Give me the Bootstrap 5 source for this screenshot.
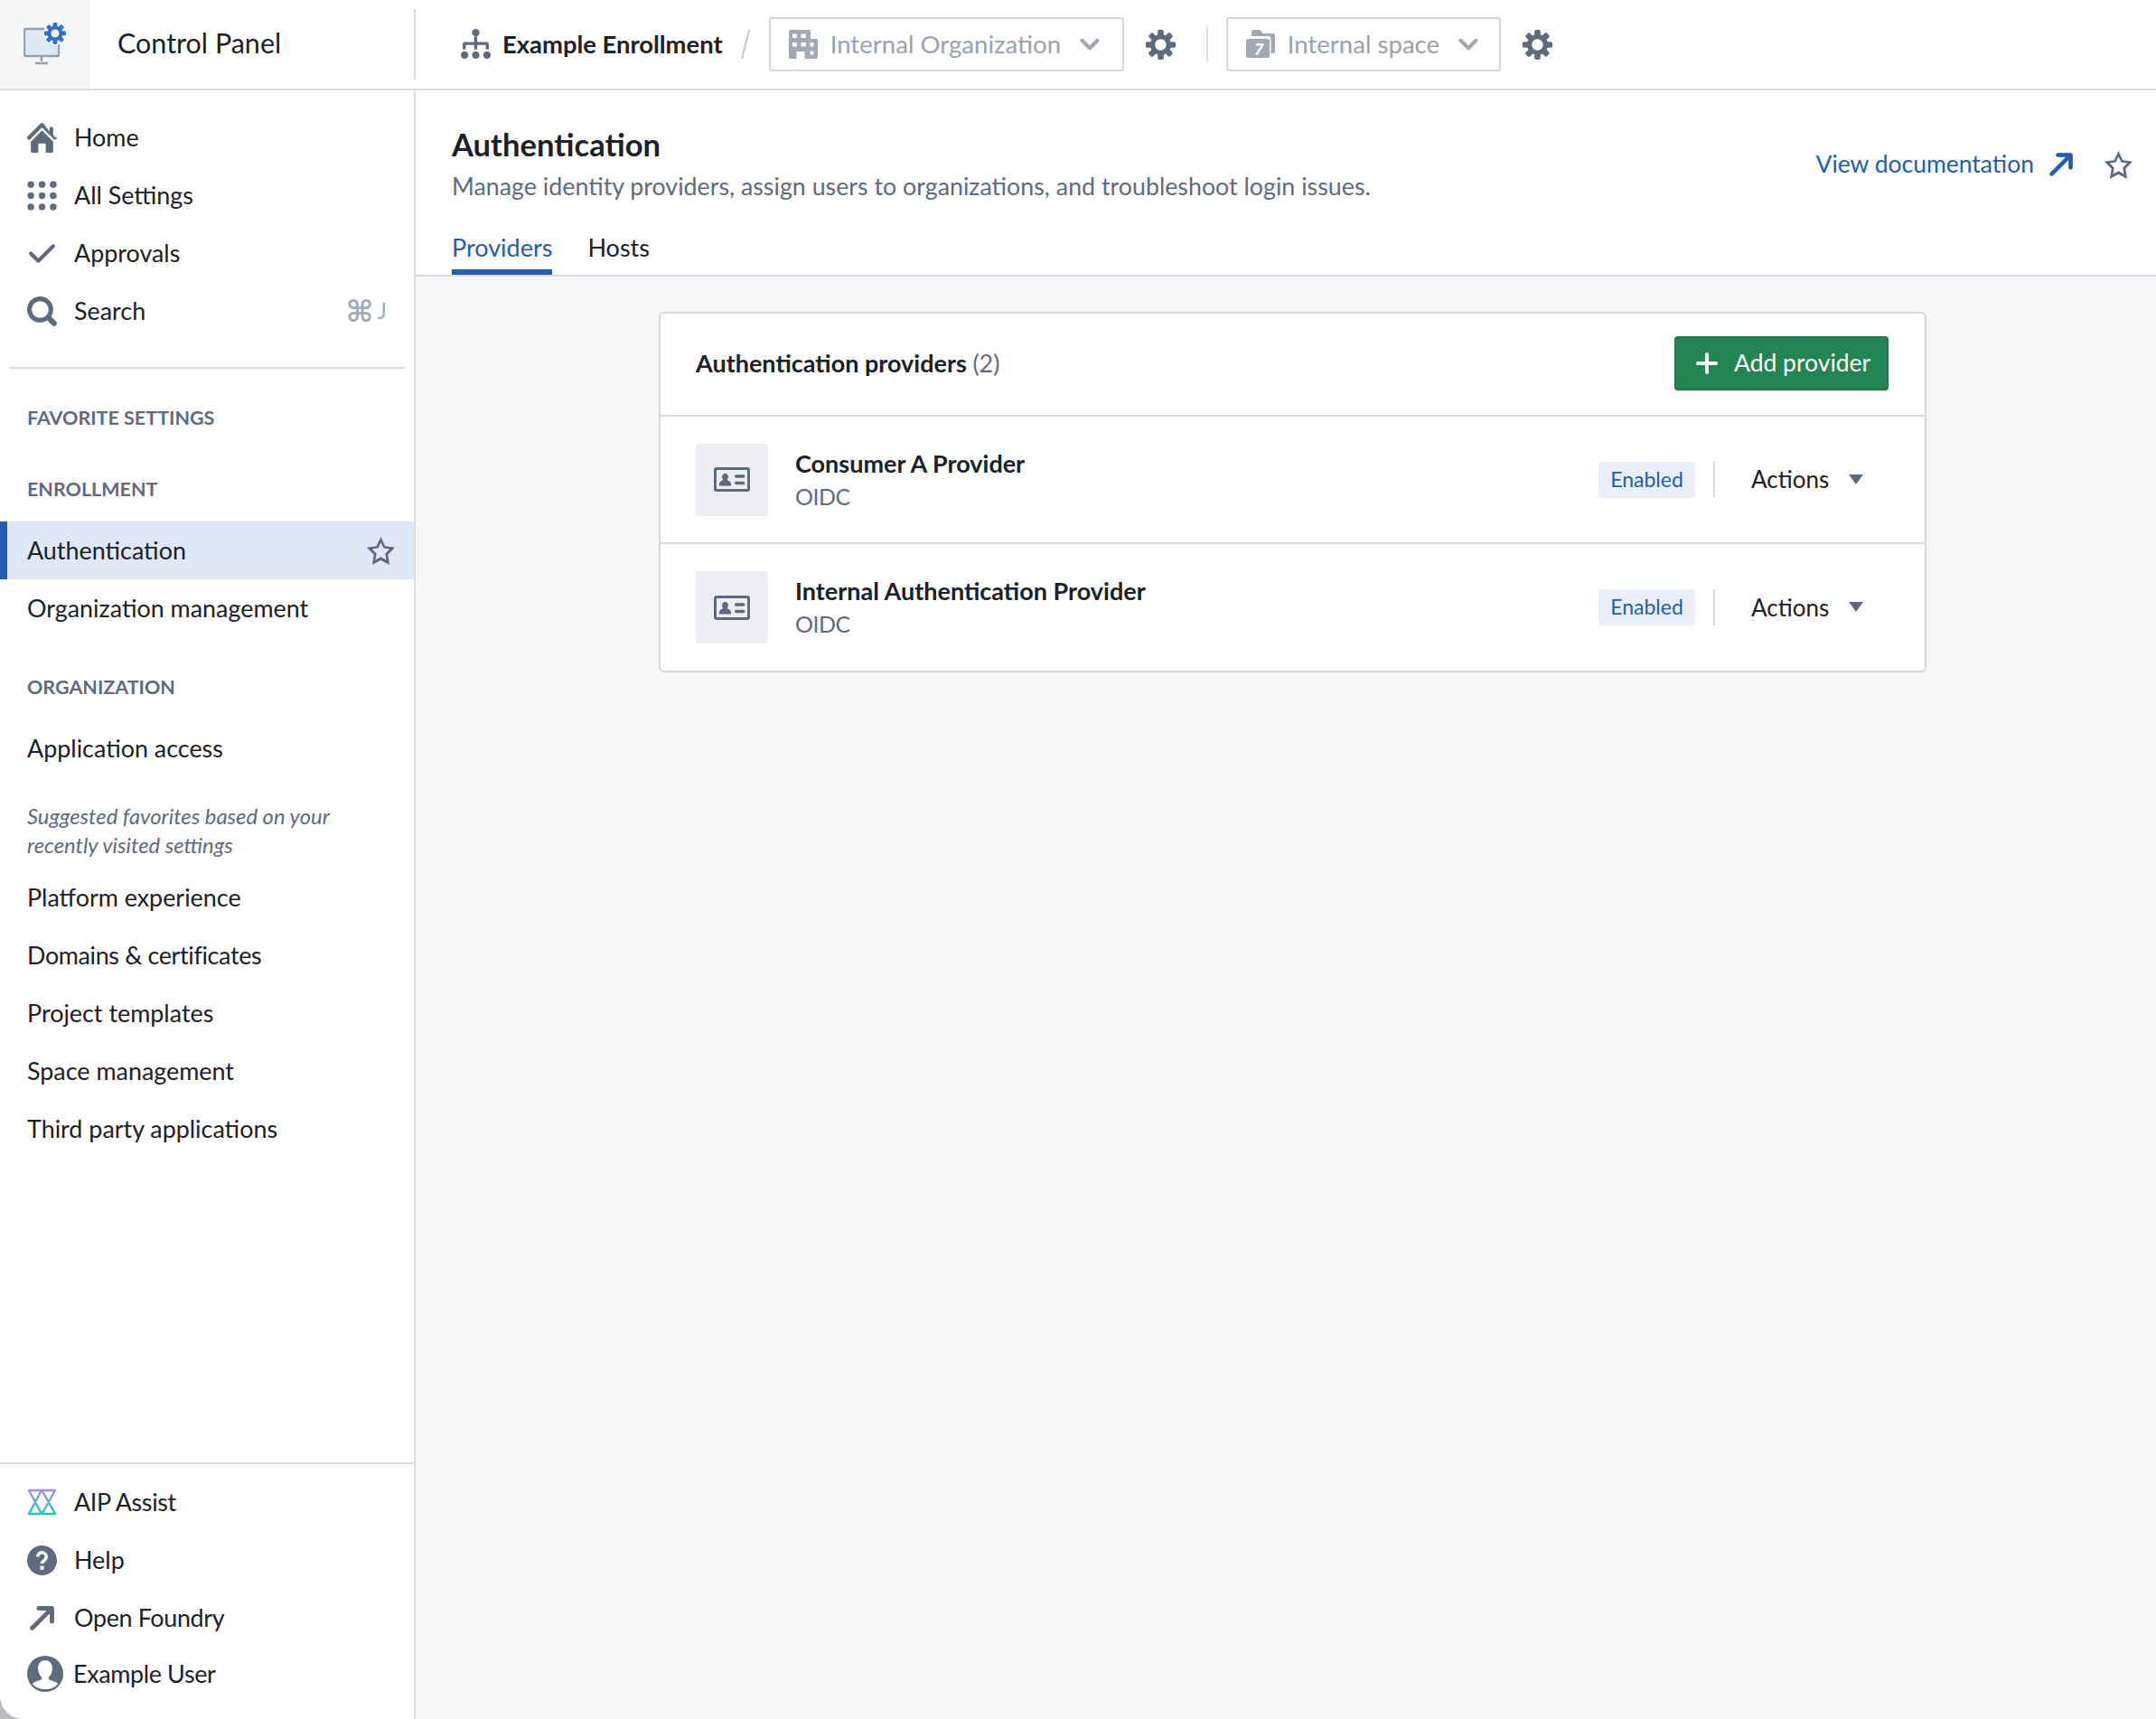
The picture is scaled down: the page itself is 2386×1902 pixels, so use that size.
<!DOCTYPE html>
<html lang="en">
<head>
  <meta charset="UTF-8">
  <title>Control Panel - Authentication</title>
  <link href="https://cdn.jsdelivr.net/npm/bootstrap@5.3.0/dist/css/bootstrap.min.css" rel="stylesheet">
  <style>
    html, body {
      height: 1902px;
      overflow: hidden;
    }

    body {
      font-family: "Lato", "Liberation Sans", sans-serif;
      font-size: 27px;
      color: #1c2127;
      background-color: #b9bbbe;
    }

    svg {
      display: block;
      flex: none;
      fill: #5f6b7c;
    }

    .app-frame {
      height: 1902px;
      background-color: #f6f7f9;
      border-bottom-left-radius: 26px;
      overflow: hidden;
    }

    /* top bar */
    .top-bar {
      height: 100px;
      background-color: #fff;
      border-bottom: 2px solid #dcdddf;
    }

    .logo-box {
      width: 100px;
      height: 98px;
      background-color: #f5f6f8;
    }

    .app-title {
      width: 358px;
      padding-left: 30px;
      padding-bottom: 2px;
      font-size: 30.5px;
    }

    .v-rule {
      width: 2px;
      background-color: #dcdddf;
    }

    .v-rule-tall {
      height: 78px;
    }

    .v-rule-short {
      height: 40px;
      margin-left: 34px;
      margin-right: 20px;
    }

    .enroll-name {
      margin-left: 50px;
      gap: 13px;
      font-weight: 700;
      font-size: 27.4px;
    }

    .crumb-slash {
      margin-left: 20px;
      margin-right: 21px;
    }

    .scope-btn {
      height: 60px;
      padding: 0 19px 0 20px;
      border: 2px solid #d5d8dc;
      border-radius: 4px;
      gap: 14px;
      color: #9aa2ad;
      font-size: 27.6px;
      white-space: nowrap;
      background-color: #fff;
    }

    .scope-btn svg {
      fill: #a3a9b3;
    }

    .scope-org {
      width: 393px;
    }

    .scope-space {
      width: 304px;
      padding-right: 17px;
    }

    .scope-btn .scope-chev {
      margin-left: auto;
    }

    .gear-gap {
      margin-left: 24px;
    }

    .thick-arrow path {
      stroke: #5f6b7c;
      stroke-width: .6;
    }

    /* sidebar */
    .side-col {
      width: 460px;
      background-color: #fff;
      border-right: 2px solid #dcdddf;
    }

    .side-link {
      height: 64px;
      padding: 0 0 0 30px;
      gap: 19px;
      color: #1c2127;
      font-size: 26.9px;
    }

    .side-link:hover {
      color: #1c2127;
    }

    .side-tight {
      letter-spacing: -.35px;
    }

    .side-top {
      padding-top: 20px;
    }

    .side-rule {
      height: 2px;
      margin: 30px 10px 0 10px;
      background-color: #dcdddf;
    }

    .side-label {
      height: 40px;
      padding-left: 30px;
      line-height: 40px;
      font-size: 21.5px;
      font-weight: 700;
      color: #5f6b7c;
      text-transform: uppercase;
    }

    .label-fav {
      margin-top: 34px;
    }

    .label-enroll {
      margin-top: 39px;
    }

    .label-org {
      margin-top: 35px;
    }

    .nav-after-label {
      margin-top: 16px;
    }

    .side-active {
      background-color: #dfe8f7;
      border-left: 8px solid #215db0;
      padding-left: 22px;
    }

    .side-active svg {
      margin-right: 21px;
    }

    .side-hint {
      margin-top: 28px;
      margin-bottom: 10px;
      padding-left: 30px;
      font-size: 23.8px;
      line-height: 31.5px;
      font-style: italic;
      color: #5f6b7c;
    }

    .kbd-hint {
      margin-left: auto;
      margin-right: 30px;
      gap: 4px;
      color: #a5abb5;
    }

    .kbd-cmd {
      font-family: "DejaVu Sans", sans-serif;
      font-size: 33px;
      line-height: 1;
      font-weight: 700;
    }

    .kbd-key {
      font-size: 25px;
    }

    .side-bottom {
      border-top: 2px solid #dcdddf;
      padding-top: 10px;
      padding-bottom: 20px;
    }

    .side-user {
      gap: 11px;
      height: 60px;
    }

    /* page header */
    .page-head {
      height: 206px;
      padding: 40px 26px 0 40px;
      background-color: #fff;
      border-bottom: 2px solid #d5d8dc;
    }

    .page-name {
      margin: 0 0 8px;
      font-size: 34.6px;
      line-height: 40px;
      font-weight: 700;
    }

    .page-sub {
      font-size: 26.8px;
      line-height: 36px;
      color: #5f6b7c;
    }

    .doc-link {
      gap: 16px;
      color: #215db0;
      text-decoration: none;
      font-size: 26.5px;
    }

    .doc-link svg {
      fill: #215db0;
    }

    .doc-link .thick-arrow path {
      stroke: #215db0;
    }

    .head-star {
      margin-left: 34px;
    }

    .head-tabs {
      margin-top: 22px;
      gap: 39px;
      border: 0;
    }

    .head-tab {
      height: 58px;
      padding: 0;
      line-height: 56px;
      color: #1c2127;
      font-size: 27px;
      border-bottom: 6px solid transparent;
    }

    .head-tab.active {
      color: #215db0;
      border-bottom-color: #215db0;
    }

    /* providers card */
    .prov-card {
      width: 1403px;
      margin: 39px 0 0 269px;
      border: 2px solid #d5d8dc;
      border-radius: 6px;
      background-color: #fff;
      overflow: hidden;
    }

    .prov-head {
      height: 114px;
      padding: 0 40px 3px 39px;
      border-bottom: 2px solid #dcdddf;
      font-weight: 700;
      font-size: 27px;
    }

    .prov-head-text {
      padding-top: 2px;
    }

    .prov-count {
      color: #5f6b7c;
      font-weight: 400;
    }

    .add-btn {
      width: 237px;
      height: 60px;
      padding: 1px 0 0 18px;
      gap: 14px;
      font-size: 26.5px;
      color: #fff;
      background-color: #238551;
      border: 2px solid #1f7a4a;
      border-radius: 4px;
      box-shadow: 0 1px 2px rgba(17, 20, 24, .2);
    }

    .add-btn svg {
      fill: #fff;
    }

    .prov-row {
      height: 141px;
      padding: 0 40px 0 39px;
      border-bottom: 2px solid #dcdddf;
    }

    .prov-row:last-child {
      border-bottom: 0;
      height: 140px;
    }

    .prov-thumb {
      width: 80px;
      height: 80px;
      margin-right: 30px;
      background-color: #edeff2;
      border-radius: 4px;
    }

    .prov-name {
      font-weight: 700;
      font-size: 27px;
      line-height: 36px;
    }

    .prov-type {
      color: #5f6b7c;
      font-size: 25px;
      letter-spacing: -.5px;
      line-height: 36px;
    }

    .state-tag {
      width: 107px;
      height: 40px;
      padding: 0;
      line-height: 38px;
      font-size: 23px;
      font-weight: 400;
      color: #215db0;
      background-color: #e9f0fb;
      border-radius: 4px;
    }

    .tag-rule {
      height: 40px;
      margin: 0 40px 0 20px;
    }

    .act-btn {
      width: 152px;
      padding: 0;
      gap: 22px;
      border: 0;
      font-size: 26px;
      color: #1c2127;
    }
  </style>
</head>
<body>
  <div class="app-frame d-flex flex-column">

    <!-- Top bar -->
    <div class="top-bar d-flex align-items-center flex-shrink-0">
      <div class="logo-box d-flex align-items-center justify-content-center">
        <svg width="48" height="48" viewBox="0 0 48 48">
          <rect x="1" y="7" width="38" height="30" rx="1.5" fill="#dfe8f7" stroke="#98a1ad" stroke-width="2.4"/>
          <path d="M20 37v6M13 45h14" fill="none" stroke="#98a1ad" stroke-width="2.4"/>
          <circle cx="35" cy="12" r="13" fill="#f5f6f8"/>
          <path transform="translate(23 0) scale(1.5)" fill="#2d72d2" d="M15.19 6.39h-1.85c-.11-.37-.27-.71-.45-1.04l1.36-1.36c.31-.31.31-.82 0-1.13l-1.13-1.13a.803.803 0 00-1.13 0l-1.36 1.36c-.33-.17-.67-.33-1.04-.44V.79c0-.44-.36-.8-.8-.8h-1.6c-.44 0-.8.36-.8.8v1.86c-.39.12-.75.28-1.1.47l-1.3-1.3c-.3-.3-.79-.3-1.09 0L1.82 2.91c-.3.3-.3.79 0 1.09l1.3 1.3c-.2.34-.36.7-.48 1.09H.79c-.44 0-.8.36-.8.8v1.6c0 .44.36.8.8.8h1.85c.11.37.27.71.45 1.04l-1.36 1.36c-.31.31-.31.82 0 1.13l1.13 1.13c.31.31.82.31 1.13 0l1.36-1.36c.33.18.67.33 1.04.44v1.86c0 .44.36.8.8.8h1.6c.44 0 .8-.36.8-.8v-1.86c.39-.12.75-.28 1.1-.47l1.3 1.3c.3.3.79.3 1.09 0l1.09-1.09c.3-.3.3-.79 0-1.09l-1.3-1.3c.19-.35.36-.71.48-1.1h1.85c.44 0 .8-.36.8-.8v-1.6a.816.816 0 00-.81-.79zm-7.2 4.6c-1.66 0-3-1.34-3-3s1.34-3 3-3 3 1.34 3 3-1.34 3-3 3z"/>
        </svg>
      </div>
      <div class="app-title">Control Panel</div>
      <div class="v-rule v-rule-tall"></div>

      <div class="enroll-name d-flex align-items-center">
        <svg width="33" height="33" viewBox="0 0 16 16">
          <circle cx="8" cy="2" r="2"/><circle cx="2" cy="14" r="2"/><circle cx="8" cy="14" r="2"/><circle cx="14" cy="14" r="2"/>
          <path d="M7.2 4h1.6v3H14a1 1 0 011 1v3h-1.600V8.600H8.800V11H7.200V8.600H2.600V11H1V8a1 1 0 011-1h5.200z"/>
        </svg>
        <span>Example Enrollment</span>
      </div>
      <svg class="crumb-slash" width="10" height="34" viewBox="0 0 10 34"><path d="M9 1L1 33" fill="none" stroke="#c5c8cd" stroke-width="2"/></svg>

      <button class="scope-btn scope-org btn d-flex align-items-center">
        <svg width="32" height="32" viewBox="0 0 32 32"><path fill-rule="evenodd" d="M2 0h20a2 2 0 012 2v8h6a2 2 0 012 2v18a2 2 0 01-2 2H17.500v-8h-9v8H2a2 2 0 01-2-2V2a2 2 0 012-2zm2 4.500V9h5V4.500zm9.500 0V9H19V4.500zM4 14v4.500h5V14zm9.500 0v4.500H19V14zm10 0v4.500h4V14zm0 9.500v4h4v-4z"/></svg>
        <span>Internal Organization</span>
        <svg class="scope-chev" width="34" height="34" viewBox="0 0 16 16"><path d="M12 5c-.28 0-.53.11-.71.29L8 8.59l-3.29-3.3a1.003 1.003 0 00-1.42 1.42l4 4c.18.18.43.29.71.29s.53-.11.71-.29l4-4A1.003 1.003 0 0012 5z"/></svg>
      </button>
      <svg class="gear-gap" width="33" height="33" viewBox="0 0 16 16"><path d="M15.19 6.39h-1.85c-.11-.37-.27-.71-.45-1.04l1.36-1.36c.31-.31.31-.82 0-1.13l-1.13-1.13a.803.803 0 00-1.13 0l-1.36 1.36c-.33-.17-.67-.33-1.04-.44V.79c0-.44-.36-.8-.8-.8h-1.6c-.44 0-.8.36-.8.8v1.86c-.39.12-.75.28-1.1.47l-1.3-1.3c-.3-.3-.79-.3-1.09 0L1.82 2.91c-.3.3-.3.79 0 1.09l1.3 1.3c-.2.34-.36.7-.48 1.09H.79c-.44 0-.8.36-.8.8v1.6c0 .44.36.8.8.8h1.85c.11.37.27.71.45 1.04l-1.36 1.36c-.31.31-.31.82 0 1.13l1.13 1.13c.31.31.82.31 1.13 0l1.36-1.36c.33.18.67.33 1.04.44v1.86c0 .44.36.8.8.8h1.6c.44 0 .8-.36.8-.8v-1.86c.39-.12.75-.28 1.1-.47l1.3 1.3c.3.3.79.3 1.09 0l1.09-1.09c.3-.3.3-.79 0-1.09l-1.3-1.3c.19-.35.36-.71.48-1.1h1.85c.44 0 .8-.36.8-.8v-1.6a.816.816 0 00-.81-.79zm-7.2 4.6c-1.66 0-3-1.34-3-3s1.34-3 3-3 3 1.34 3 3-1.34 3-3 3z"/></svg>
      <div class="v-rule v-rule-short"></div>
      <button class="scope-btn scope-space btn d-flex align-items-center">
        <svg width="32" height="32" viewBox="0 0 32 32">
          <path d="M6 7V2a2 2 0 012-2h7l4 4h11a2 2 0 012 2v18a2 2 0 01-2 2h-2.500V10a3 3 0 00-3-3z"/>
          <path fill-rule="evenodd" d="M2 10h22a2 2 0 012 2v17a2 2 0 01-2 2H2a2 2 0 01-2-2V12a2 2 0 012-2zm9 5v2.500h5.500L10 27.500h3L19.500 17v-2z"/>
        </svg>
        <span>Internal space</span>
        <svg class="scope-chev" width="34" height="34" viewBox="0 0 16 16"><path d="M12 5c-.28 0-.53.11-.71.29L8 8.59l-3.29-3.3a1.003 1.003 0 00-1.42 1.42l4 4c.18.18.43.29.71.29s.53-.11.71-.29l4-4A1.003 1.003 0 0012 5z"/></svg>
      </button>
      <svg class="gear-gap" width="33" height="33" viewBox="0 0 16 16"><path d="M15.19 6.39h-1.85c-.11-.37-.27-.71-.45-1.04l1.36-1.36c.31-.31.31-.82 0-1.13l-1.13-1.13a.803.803 0 00-1.13 0l-1.36 1.36c-.33-.17-.67-.33-1.04-.44V.79c0-.44-.36-.8-.8-.8h-1.6c-.44 0-.8.36-.8.8v1.86c-.39.12-.75.28-1.1.47l-1.3-1.3c-.3-.3-.79-.3-1.09 0L1.82 2.91c-.3.3-.3.79 0 1.09l1.3 1.3c-.2.34-.36.7-.48 1.09H.79c-.44 0-.8.36-.8.8v1.6c0 .44.36.8.8.8h1.85c.11.37.27.71.45 1.04l-1.36 1.36c-.31.31-.31.82 0 1.13l1.13 1.13c.31.31.82.31 1.13 0l1.36-1.36c.33.18.67.33 1.04.44v1.86c0 .44.36.8.8.8h1.6c.44 0 .8-.36.8-.8v-1.86c.39-.12.75-.28 1.1-.47l1.3 1.3c.3.3.79.3 1.09 0l1.09-1.09c.3-.3.3-.79 0-1.09l-1.3-1.3c.19-.35.36-.71.48-1.1h1.85c.44 0 .8-.36.8-.8v-1.6a.816.816 0 00-.81-.79zm-7.2 4.6c-1.66 0-3-1.34-3-3s1.34-3 3-3 3 1.34 3 3-1.34 3-3 3z"/></svg>
    </div>

    <div class="d-flex flex-grow-1">
      <!-- Sidebar -->
      <div class="side-col d-flex flex-column flex-shrink-0">
        <nav class="nav flex-column side-top">
          <a class="nav-link side-link d-flex align-items-center" href="#">
            <svg width="33" height="33" viewBox="0 0 16 16"><path d="M2 10v5c0 .55.45 1 1 1h3v-5h4v5h3c.55 0 1-.45 1-1v-5L8 4l-6 6zm13.71-1.71L14 6.59V3c0-.55-.45-1-1-1s-1 .45-1 1v1.59L8.71.29C8.53.11 8.28 0 8 0s-.53.11-.71.29l-7 7a1.003 1.003 0 001.42 1.42L8 2.41l6.29 6.29c.18.19.43.3.71.3a1.003 1.003 0 00.71-1.71z"/></svg>
            Home
          </a>
          <a class="nav-link side-link d-flex align-items-center" href="#">
            <svg width="33" height="33" viewBox="0 0 16 16"><circle cx="2" cy="2" r="1.8"/><circle cx="8" cy="2" r="1.8"/><circle cx="14" cy="2" r="1.8"/><circle cx="2" cy="8" r="1.8"/><circle cx="8" cy="8" r="1.8"/><circle cx="14" cy="8" r="1.8"/><circle cx="2" cy="14" r="1.8"/><circle cx="8" cy="14" r="1.8"/><circle cx="14" cy="14" r="1.8"/></svg>
            All Settings
          </a>
          <a class="nav-link side-link d-flex align-items-center" href="#">
            <svg width="33" height="33" viewBox="0 0 16 16"><path d="M14 3c-.28 0-.53.11-.71.29L6 10.59l-3.29-3.3a1.003 1.003 0 00-1.42 1.42l4 4c.18.18.43.29.71.29s.53-.11.71-.29l8-8A1.003 1.003 0 0014 3z"/></svg>
            Approvals
          </a>
          <a class="nav-link side-link d-flex align-items-center" href="#">
            <svg width="33" height="33" viewBox="0 0 16 16"><path d="M15.55 13.43l-2.67-2.68a6.94 6.94 0 001.13-3.76c0-3.87-3.14-7-7.01-7S0 3.12 0 6.99s3.14 7 7.01 7c1.39 0 2.68-.41 3.77-1.12l2.67 2.67a1.498 1.498 0 002.12-2.11zM7.01 11.5c-2.49 0-4.51-2.02-4.51-4.5s2.02-4.5 4.51-4.5 4.51 2.02 4.51 4.5-2.02 4.5-4.51 4.5z"/></svg>
            Search
            <span class="kbd-hint d-flex align-items-center"><span class="kbd-cmd">⌘</span><span class="kbd-key">J</span></span>
          </a>
        </nav>
        <div class="side-rule"></div>

        <div class="side-label label-fav">Favorite settings</div>
        <div class="side-label label-enroll">Enrollment</div>
        <nav class="nav flex-column nav-after-label">
          <a class="nav-link side-link side-active d-flex align-items-center justify-content-between" href="#">
            Authentication
            <svg width="31" height="31" viewBox="0 0 16 16"><path d="M16 6.11l-5.53-.84L8 0 5.53 5.27 0 6.11l4 4.1L3.06 16 8 13.27 12.94 16 12 10.21l4-4.1zM4.91 13.2l.59-3.62L3 7.02l3.45-.53L8 3.2l1.55 3.29 3.45.53-2.5 2.56.59 3.62L8 11.49 4.91 13.2z"/></svg>
          </a>
          <a class="nav-link side-link d-flex align-items-center" href="#">Organization management</a>
        </nav>
        <div class="side-label label-org">Organization</div>
        <nav class="nav flex-column nav-after-label">
          <a class="nav-link side-link d-flex align-items-center" href="#">Application access</a>
        </nav>
        <div class="side-hint">Suggested favorites based on your<br>recently visited settings</div>
        <nav class="nav flex-column">
          <a class="nav-link side-link d-flex align-items-center" href="#">Platform experience</a>
          <a class="nav-link side-link side-tight d-flex align-items-center" href="#">Domains &amp; certificates</a>
          <a class="nav-link side-link d-flex align-items-center" href="#">Project templates</a>
          <a class="nav-link side-link d-flex align-items-center" href="#">Space management</a>
          <a class="nav-link side-link d-flex align-items-center" href="#">Third party applications</a>
        </nav>

        <nav class="nav flex-column side-bottom mt-auto">
          <a class="nav-link side-link side-tight d-flex align-items-center" href="#">
            <svg width="33" height="30" viewBox="0 0 33 30">
              <defs><linearGradient id="aipGrad" x1="0" y1="0" x2="0" y2="1"><stop offset="0" stop-color="#a48cf6"/><stop offset="1" stop-color="#1cc5bf"/></linearGradient></defs>
              <path d="M2 2h14L2 28h14zM16.500 2h14.500L16.500 28h14.500z" fill="none" stroke="url(#aipGrad)" stroke-width="2.4" stroke-linejoin="round"/>
            </svg>
            AIP Assist
          </a>
          <a class="nav-link side-link d-flex align-items-center" href="#">
            <svg width="33" height="33" viewBox="0 0 16 16"><circle cx="8" cy="8" r="8"/><path d="M5.700 6.100a2.300 2.300 0 114 1.500c-.8.7-1.700 1.100-1.700 2.100" fill="none" stroke="#fff" stroke-width="1.700"/><rect x="7" y="11" width="2" height="2" fill="#fff"/></svg>
            Help
          </a>
          <a class="nav-link side-link side-tight d-flex align-items-center" href="#">
            <svg class="thick-arrow" width="33" height="33" viewBox="-1 -1 18 18"><path d="M14 1H6c-.55 0-1 .45-1 1s.45 1 1 1h5.590L1.290 13.290a1.003 1.003 0 001.420 1.420L13 4.410V10c0 .55.45 1 1 1s1-.45 1-1V2c0-.55-.45-1-1-1z"/></svg>
            Open Foundry
          </a>
          <a class="nav-link side-link side-user side-tight d-flex align-items-center" href="#">
            <svg width="40" height="40" viewBox="0 0 40 40">
              <circle cx="20" cy="20" r="20"/>
              <path d="M20 5c-5 0-8 4-8 9 0 4 2 8 4 9.500v2.500c-3 2-8 2-10 5 3 4 8 6 14 6s11-2 14-6c-2-3-7-3-10-5v-2.500c2-1.500 4-5.500 4-9.500 0-5-3-9-8-9z" fill="#fff"/>
            </svg>
            Example User
          </a>
        </nav>
      </div>

      <!-- Main -->
      <main class="flex-grow-1">
        <div class="page-head">
          <div class="d-flex justify-content-between align-items-center">
            <div>
              <h1 class="page-name">Authentication</h1>
              <div class="page-sub">Manage identity providers, assign users to organizations, and troubleshoot login issues.</div>
            </div>
            <div class="d-flex align-items-center">
              <a class="doc-link d-flex align-items-center" href="#">
                View documentation
                <svg class="thick-arrow" width="28" height="28" viewBox="0 0 16 16"><path d="M14 1H6c-.55 0-1 .45-1 1s.45 1 1 1h5.590L1.290 13.290a1.003 1.003 0 001.420 1.420L13 4.410V10c0 .55.45 1 1 1s1-.45 1-1V2c0-.55-.45-1-1-1z"/></svg>
              </a>
              <svg class="head-star" width="31" height="31" viewBox="0 0 16 16"><path d="M16 6.11l-5.53-.84L8 0 5.53 5.27 0 6.11l4 4.1L3.06 16 8 13.27 12.94 16 12 10.21l4-4.1zM4.91 13.2l.59-3.62L3 7.02l3.45-.53L8 3.2l1.55 3.29 3.45.53-2.5 2.56.59 3.62L8 11.49 4.91 13.2z"/></svg>
            </div>
          </div>
          <ul class="nav head-tabs">
            <li class="nav-item"><a class="nav-link head-tab active" href="#">Providers</a></li>
            <li class="nav-item"><a class="nav-link head-tab" href="#">Hosts</a></li>
          </ul>
        </div>

        <div class="prov-card">
          <div class="prov-head d-flex align-items-center justify-content-between">
            <span class="prov-head-text">Authentication providers <span class="prov-count">(2)</span></span>
            <button class="btn add-btn d-flex align-items-center">
              <svg width="32" height="32" viewBox="0 0 16 16"><path d="M13 7H9V3c0-.55-.45-1-1-1s-1 .45-1 1v4H3c-.55 0-1 .45-1 1s.45 1 1 1h4v4c0 .55.45 1 1 1s1-.45 1-1V9h4c.55 0 1-.45 1-1s-.45-1-1-1z"/></svg>
              Add provider
            </button>
          </div>

          <div class="prov-row d-flex align-items-center">
            <div class="prov-thumb d-flex align-items-center justify-content-center">
              <svg width="40" height="27" viewBox="0 0 40 27">
                <path fill-rule="evenodd" d="M3 0h34a3 3 0 013 3v21a3 3 0 01-3 3H3a3 3 0 01-3-3V3a3 3 0 013-3zm0 3v21h34V3z"/>
                <path d="M12.700 7a3.200 3.200 0 013.200 3.500c0 1.500-.7 2.500-1 3.300 0 1 4.100 1.700 4.100 4.700v2H6v-2c0-3 4.100-3.700 4.100-4.700-.3-.8-1-1.800-1-3.300A3.200 3.200 0 0112.700 7z"/>
                <rect x="23" y="8.300" width="11.500" height="3.500" rx="1.700"/><rect x="23" y="15.700" width="11.500" height="3.500" rx="1.700"/>
              </svg>
            </div>
            <div class="flex-grow-1">
              <div class="prov-name">Consumer A Provider</div>
              <div class="prov-type">OIDC</div>
            </div>
            <span class="badge state-tag">Enabled</span>
            <div class="v-rule tag-rule"></div>
            <button class="btn act-btn d-flex align-items-center">
              Actions
              <svg width="16" height="12" viewBox="0 0 16 12"><path d="M0 0h16L8 11z"/></svg>
            </button>
          </div>

          <div class="prov-row d-flex align-items-center">
            <div class="prov-thumb d-flex align-items-center justify-content-center">
              <svg width="40" height="27" viewBox="0 0 40 27">
                <path fill-rule="evenodd" d="M3 0h34a3 3 0 013 3v21a3 3 0 01-3 3H3a3 3 0 01-3-3V3a3 3 0 013-3zm0 3v21h34V3z"/>
                <path d="M12.700 7a3.200 3.200 0 013.200 3.500c0 1.500-.7 2.500-1 3.300 0 1 4.100 1.700 4.100 4.700v2H6v-2c0-3 4.100-3.700 4.100-4.700-.3-.8-1-1.800-1-3.300A3.200 3.200 0 0112.700 7z"/>
                <rect x="23" y="8.300" width="11.500" height="3.500" rx="1.700"/><rect x="23" y="15.700" width="11.500" height="3.500" rx="1.700"/>
              </svg>
            </div>
            <div class="flex-grow-1">
              <div class="prov-name">Internal Authentication Provider</div>
              <div class="prov-type">OIDC</div>
            </div>
            <span class="badge state-tag">Enabled</span>
            <div class="v-rule tag-rule"></div>
            <button class="btn act-btn d-flex align-items-center">
              Actions
              <svg width="16" height="12" viewBox="0 0 16 12"><path d="M0 0h16L8 11z"/></svg>
            </button>
          </div>
        </div>
      </main>
    </div>
  </div>
  <script src="https://cdn.jsdelivr.net/npm/bootstrap@5.3.0/dist/js/bootstrap.bundle.min.js"></script>
</body>
</html>
